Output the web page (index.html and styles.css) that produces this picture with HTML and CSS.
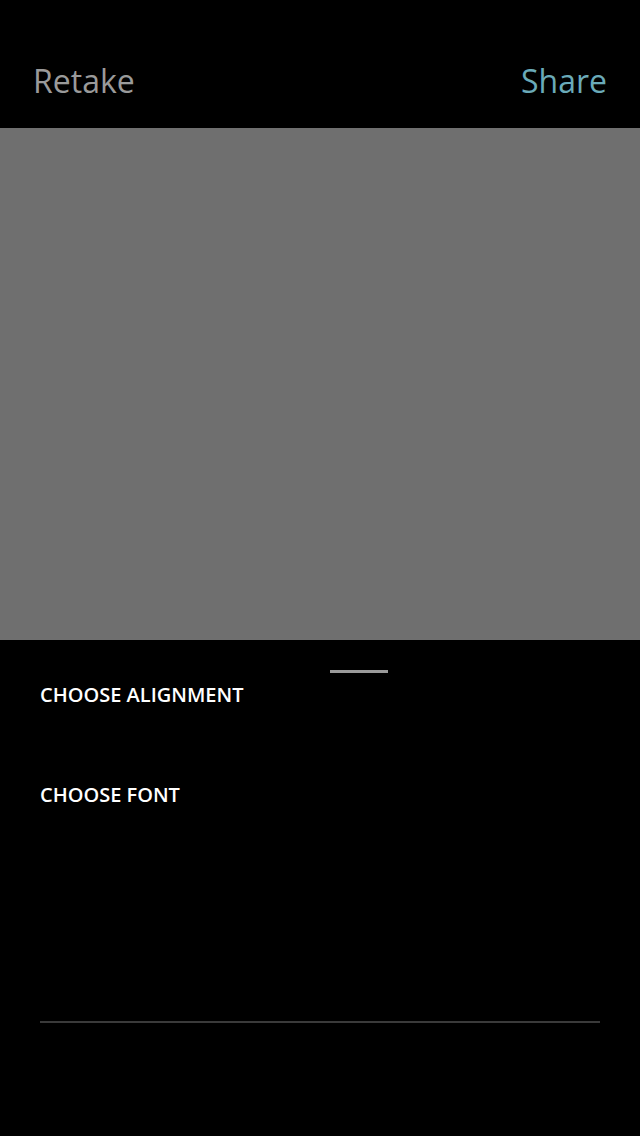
FILE: index.html
```html
<!DOCTYPE html>
<html>

<head>
    <meta charset="utf-8">
    <meta name="viewport" content="width=device-width, initial-scale=1">
    <title>Edit Photo</title>
    <link rel="stylesheet" href="styles.css">
</head>

<body>
    <div class="topbar">
        <span class="retake">Retake</span>
        <span class="share">Share</span>
    </div>

    <div class="preview"></div>

    <div class="panel">
        <div class="handle"></div>
        <div class="option">CHOOSE ALIGNMENT</div>
        <div class="option">CHOOSE FONT</div>
        <div class="divider"></div>
    </div>
</body>

</html>
```

FILE: styles.css
```css
body {
    margin: 0;
    background-color: black;
    font-family: "Open Sans", sans-serif;
    height: 1136px;
    overflow: hidden;
}

.topbar {
    height: 128px;
    display: flex;
    justify-content: space-between;
    align-items: center;
    padding: 32px 33px 0;
    box-sizing: border-box;
    font-size: 32px;
}

.retake {
    color: #9a9a9a;
}

.share {
    color: #6aaab8;
}

.preview {
    height: 512px;
    background-color: #6f6f6f;
}

.panel {
    padding: 30px 40px 0;
}

.handle {
    width: 58px;
    height: 3px;
    background-color: #9a9a9a;
    margin: 0 auto 0 290px;
}

.option {
    color: white;
    font-size: 20px;
    font-weight: 600;
    line-height: 26px;
    margin-top: 9px;
}

.option + .option {
    margin-top: 74px;
}

.divider {
    height: 2px;
    background-color: #3a3a3a;
    margin-top: 213px;
}
```
